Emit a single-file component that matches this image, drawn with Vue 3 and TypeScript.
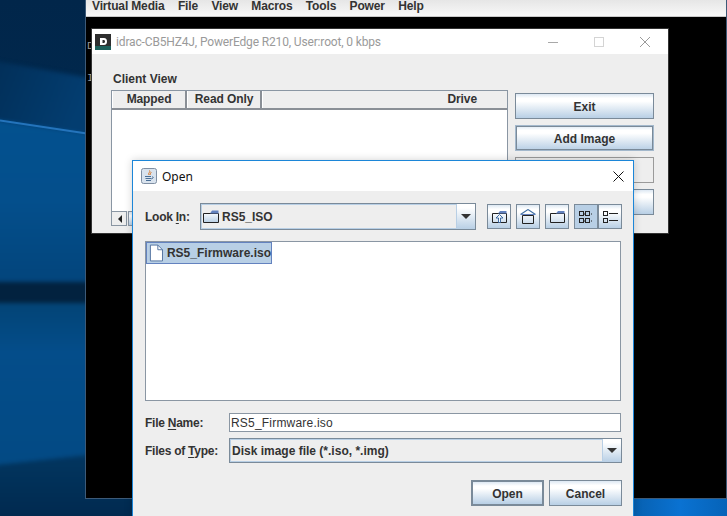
<template>
  <div class="desktop">
    <!-- windows 10 wallpaper behind the console -->
    <svg class="wallpaper" width="727" height="516" viewBox="0 0 727 516">
      <defs>
        <linearGradient id="wpTop" x1="0" y1="0" x2="0" y2="1">
          <stop offset="0" stop-color="#01264a" />
          <stop offset="1" stop-color="#022f58" />
        </linearGradient>
        <linearGradient id="wpUpper" x1="0" y1="0" x2="1" y2="0.300">
          <stop offset="0" stop-color="#022e57" />
          <stop offset="1" stop-color="#033d70" />
        </linearGradient>
        <linearGradient id="wpMid" x1="0" y1="0" x2="0" y2="1">
          <stop offset="0" stop-color="#03518f" />
          <stop offset="0.500" stop-color="#044f8c" />
          <stop offset="1" stop-color="#03457c" />
        </linearGradient>
        <linearGradient id="wpLow" x1="0" y1="0" x2="0" y2="1">
          <stop offset="0" stop-color="#034476" />
          <stop offset="0.300" stop-color="#044d8a" />
          <stop offset="1" stop-color="#034a84" />
        </linearGradient>
        <linearGradient id="wpBottom" x1="0" y1="0" x2="0" y2="1">
          <stop offset="0" stop-color="#023660" />
          <stop offset="1" stop-color="#01284d" />
        </linearGradient>
        <linearGradient id="wpStrip" x1="0" y1="0" x2="1" y2="0">
          <stop offset="0" stop-color="#0760b0" />
          <stop offset="0.500" stop-color="#0a72d2" />
          <stop offset="1" stop-color="#0663b8" />
        </linearGradient>
      </defs>
      <rect width="727" height="516" fill="url(#wpTop)" />
      <g class="wp-soft">
        <polygon points="-10,60 90,78 90,134 -10,119" fill="url(#wpUpper)" />
        <polygon points="-10,119 90,134 90,283 -10,283" fill="url(#wpMid)" />
        <rect x="-10" y="282" width="100" height="21" fill="#02223f" />
        <polygon points="-10,303 90,303 90,455 -10,466" fill="url(#wpLow)" />
        <polygon points="-10,466 90,455 140,455 140,526 -10,526" fill="url(#wpBottom)" />
      </g>
      <path d="M0 120.500L90 134" stroke="#2474bc" stroke-width="2" />
      <rect x="634" y="498" width="93" height="18" fill="url(#wpStrip)" />
    </svg>

    <div class="console">
      <div class="menubar">
        <span v-for="m in menus" :key="m">{{ m }}</span>
      </div>
      <pre class="term">D

I</pre>
    </div>

    <!-- virtual media window -->
    <section class="vm-window">
      <header class="vm-title">
        <svg class="vm-logo" width="16" height="16" viewBox="0 0 16 16">
          <rect width="16" height="16" fill="#2e2e2e" />
          <rect y="12" width="16" height="4" fill="#10897f" opacity="0.550" />
          <path d="M5 4h4c2 0 3 1.500 3 3.500S11 11 9 11H5z" fill="#fff" />
          <path d="M7.500 6h1.200c.8 0 1.300.6 1.300 1.500S9.500 9 8.700 9H7.500z" fill="#2e2e2e" />
        </svg>
        <span class="vm-caption">idrac-CB5HZ4J, PowerEdge R210, User:root, 0 kbps</span>
        <div class="caption-btns">
          <svg width="12" height="12" viewBox="0 0 12 12"><path d="M1 6.500h10" stroke="#a8a8a8" /></svg>
          <svg width="12" height="12" viewBox="0 0 12 12"><rect x="1.500" y="1.500" width="9" height="9" fill="none" stroke="#d4d4d4" /></svg>
          <svg width="12" height="12" viewBox="0 0 12 12"><path d="M1 1l10 10M11 1L1 11" stroke="#9a9a9a" /></svg>
        </div>
      </header>
      <div class="vm-body">
        <div class="client">
          <div class="client-label">Client View</div>
          <div class="table">
            <div class="thead">
              <div class="th mapped">Mapped</div>
              <div class="th readonly">Read Only</div>
              <div class="th drive">Drive</div>
            </div>
            <div class="tbody"></div>
            <div class="hscroll">
              <div class="scroll-left">
                <svg width="5" height="8" viewBox="0 0 5 8"><path d="M5 0v8L1 4z" fill="#222" /></svg>
              </div>
              <div class="scroll-thumb"></div>
            </div>
          </div>
        </div>
        <div class="side-btns">
          <button class="jbtn">Exit</button>
          <button class="jbtn focused">Add Image</button>
          <button class="jbtn disabled"></button>
          <button class="jbtn"></button>
        </div>
      </div>
    </section>

    <!-- open file dialog -->
    <section class="dialog">
      <header class="dlg-title">
        <svg class="java-icon" width="16" height="16" viewBox="0 0 16 16">
          <rect x="0.500" y="0.500" width="15" height="15" rx="2" fill="#d9e3ee" stroke="#7f8fa3" />
          <path d="M8.500 2.500c1.500 1.500-2 2.500-.5 4.500M10 4c.5 1-1.500 1.500-.8 3" fill="none" stroke="#d9731f" />
          <path d="M4 8.500h6M4.500 10.500h6M5 12.500h5" stroke="#4a6f96" />
          <path d="M11 9c1.500-.5 2 1-.5 2" fill="none" stroke="#4a6f96" />
        </svg>
        <span class="dlg-caption">Open</span>
        <svg class="dlg-close" width="11" height="11" viewBox="0 0 11 11"><path d="M.5.500l10 10M10.500.500l-10 10" stroke="#111" /></svg>
      </header>
      <div class="dlg-body">
        <div class="look-row">
          <label class="field-label look-label">Look <u>I</u>n:</label>
          <div class="combo look-combo">
            <div class="combo-value">
              <svg width="16" height="13" viewBox="0 0 16 13">
                <defs>
                  <linearGradient id="folderFill" x1="0" y1="0" x2="0" y2="1">
                    <stop offset="0" stop-color="#f6f9fc" />
                    <stop offset="1" stop-color="#b8cfe5" />
                  </linearGradient>
                </defs>
                <path d="M.5 3.500h15v9H.5z" fill="url(#folderFill)" stroke="#222" />
                <path d="M9 .500h6.500v3H7z" fill="#6382bf" />
              </svg>
              <span>RS5_ISO</span>
            </div>
            <div class="combo-arrow"><i></i></div>
          </div>
          <div class="tools">
            <button class="tool">
              <svg width="15" height="12" viewBox="0 0 15 12">
                <path d="M.5 2.500h14v9H.5z" fill="none" stroke="#222" />
                <path d="M8 0h6.500v2.500H6z" fill="#6382bf" />
                <path d="M7.500 3.500L4 7h2.500v4.500h2V7H11z" fill="#f4f8fc" stroke="#2f5f9a" stroke-width="0.900" />
              </svg>
            </button>
            <button class="tool">
              <svg width="16" height="15" viewBox="0 0 16 15">
                <path d="M.5 5.500L8 .500l7.500 5" fill="none" stroke="#3f6fa5" stroke-width="1.100" />
                <path d="M1 5.500h14" stroke="#6382bf" />
                <path d="M2.500 6.500h11v8h-11z" fill="none" stroke="#222" />
              </svg>
            </button>
            <button class="tool">
              <svg width="15" height="12" viewBox="0 0 15 12">
                <path d="M.5 2.500h14v9H.5z" fill="none" stroke="#222" />
                <path d="M8 0h6.500v2.500H6z" fill="#6382bf" />
              </svg>
            </button>
            <div class="tool-pair">
              <button class="tool active">
                <svg width="15" height="12" viewBox="0 0 15 12" fill="none" stroke="#222">
                  <rect x="0.500" y="0.500" width="4" height="4" />
                  <rect x="6.500" y="0.500" width="4" height="4" />
                  <rect x="0.500" y="7.500" width="4" height="4" />
                  <rect x="6.500" y="7.500" width="4" height="4" />
                  <path d="M5 3h1M12 3h1M5 10h1M12 10h1" />
                </svg>
              </button>
              <button class="tool">
                <svg width="15" height="12" viewBox="0 0 15 12" fill="none" stroke="#222">
                  <rect x="0.500" y="0.500" width="4" height="4" />
                  <rect x="0.500" y="7.500" width="4" height="4" />
                  <path d="M6 2.500h9M6 9.500h9" />
                </svg>
              </button>
            </div>
          </div>
        </div>

        <div class="file-list">
          <div class="file-item">
            <svg width="15" height="18" viewBox="0 0 15 18">
              <path d="M1.500.500h8l5 5v12h-13z" fill="#fff" stroke="#4d6f9d" />
              <path d="M9.500.500v5h5" fill="none" stroke="#4d6f9d" />
            </svg>
            <span>RS5_Firmware.iso</span>
          </div>
        </div>

        <div class="name-row">
          <label class="field-label">File <u>N</u>ame:</label>
          <div class="name-input">RS5_Firmware.iso</div>
        </div>
        <div class="type-row">
          <label class="field-label">Files of <u>T</u>ype:</label>
          <div class="combo type-combo">
            <div class="combo-value">Disk image file (*.iso, *.img)</div>
            <div class="combo-arrow"><i></i></div>
          </div>
        </div>
        <div class="actions">
          <button class="jbtn default">Open</button>
          <button class="jbtn">Cancel</button>
        </div>
      </div>
    </section>
  </div>
</template>

<script setup lang="ts">
const menus: string[] = ['Virtual Media', 'File', 'View', 'Macros', 'Tools', 'Power', 'Help']
</script>

<style>
html, body {
  margin: 0;
  background: #000;
}
</style>

<style scoped>
.desktop {
  position: relative;
  width: 727px;
  height: 516px;
  overflow: hidden;
  font-family: "Liberation Sans", Arial, sans-serif;
  font-size: 12px;
  font-weight: 700;
  color: #333;
}
.wallpaper {
  position: absolute;
  inset: 0;
  display: block;
}
.wp-soft {
  filter: blur(2px);
}
.console {
  position: absolute;
  left: 85px;
  top: 0;
  right: 0;
  height: 499px;
  box-sizing: border-box;
  background: #000;
  border: 1px solid #3d5a78;
  border-top: 0;
}
.menubar {
  display: flex;
  gap: 13.4px;
  height: 17px;
  box-sizing: border-box;
  padding: 0 0 0 6px;
  line-height: 12px;
  letter-spacing: -0.15px;
  background: linear-gradient(#e6e6e6, #f8f8f8);
  border-bottom: 1px solid #c9c9c9;
  color: #333;
}
.term {
  margin: 21px 0 0 1px;
  font: 11px/16px "Liberation Mono", monospace;
  color: #9c9c9c;
}
.vm-window {
  position: absolute;
  left: 91px;
  top: 28px;
  width: 578px;
  height: 206px;
  box-sizing: border-box;
  border: 1px solid #333;
  background: #eee;
  display: flex;
  flex-direction: column;
}
.vm-title {
  height: 25px;
  flex: none;
  background: #fff;
  display: flex;
  align-items: center;
  padding-left: 3px;
  font: 400 12px Roboto, "Noto Sans", sans-serif;
  letter-spacing: -0.15px;
  color: #9a9a9a;
}
.vm-logo {
  flex: none;
  margin-right: 5px;
}
.vm-caption {
  flex: 1;
  white-space: nowrap;
}
.caption-btns {
  display: flex;
  gap: 34px;
  padding-right: 17px;
}
.vm-body {
  flex: 1;
  min-height: 0;
  display: flex;
  padding: 18px 14px 0 19px;
  gap: 7px;
}
.client {
  width: 397px;
  flex: none;
}
.client-label {
  height: 18px;
  line-height: 14px;
  padding-left: 2px;
}
.table {
  height: 136px;
  border: 1px solid #8a96a3;
  border-bottom: 0;
  box-sizing: border-box;
  display: flex;
  flex-direction: column;
  background: #fff;
}
.thead {
  display: flex;
  height: 19px;
  flex: none;
  background: #eee;
  border-bottom: 2px solid #8a8f96;
  box-sizing: border-box;
  line-height: 16px;
}
.th {
  box-sizing: border-box;
  border-left: 1px solid #fff;
  border-right: 2px solid #8a8f96;
  text-align: center;
  letter-spacing: -0.1px;
}
.mapped { width: 75px; }
.readonly { width: 75px; }
.drive {
  flex: 1;
  border-right: 0;
  text-align: right;
  padding-right: 30px;
}
.tbody { flex: 1; }
.hscroll {
  height: 15px;
  flex: none;
  display: flex;
  background: #eee;
}
.scroll-left {
  width: 15px;
  flex: none;
  display: flex;
  align-items: center;
  justify-content: center;
  border: 1px solid #8a96a3;
  border-left: 0;
  box-sizing: border-box;
}
.scroll-thumb {
  flex: 1;
  margin-left: 1px;
  box-sizing: border-box;
  border: 1px solid #8a96a3;
  background: linear-gradient(#dde8f3, #fff 30%, #b8cfe5);
}
.side-btns {
  padding-top: 21px;
  display: flex;
  flex-direction: column;
  gap: 6px;
  width: 139px;
}
.jbtn {
  height: 26px;
  flex: none;
  padding: 1px 0 0;
  box-sizing: border-box;
  border: 1px solid #7a8a99;
  background: linear-gradient(#dde8f3 0, #fff 18%, #fff 30%, #b8cfe5 100%);
  font: inherit;
  color: #333;
  text-align: center;
}
.jbtn.focused {
  border: 1px solid #a3b8cc;
  box-shadow: inset 0 0 0 1px #7a8a99;
}
.jbtn.disabled {
  background: #eee;
  border-color: #9a9a9a;
}
.dialog {
  position: absolute;
  left: 132px;
  top: 160px;
  width: 502px;
  height: 356px;
  box-sizing: border-box;
  border: 1px solid #1c86d8;
  border-bottom: 0;
  background: #eee;
  display: flex;
  flex-direction: column;
  box-shadow: 0 0 8px rgba(0, 0, 0, 0.18);
}
.dlg-title {
  height: 30px;
  flex: none;
  background: #fff;
  display: flex;
  align-items: center;
  padding-left: 8px;
  font: 400 12px "Noto Sans", "Open Sans", sans-serif;
  color: #111;
}
.java-icon {
  margin-right: 5px;
}
.dlg-caption {
  flex: 1;
}
.dlg-close {
  margin-right: 9px;
}
.dlg-body {
  flex: 1;
  min-height: 0;
  padding: 12px 11px 0 12px;
  display: flex;
  flex-direction: column;
}
.look-row {
  display: flex;
  align-items: center;
  height: 27px;
  flex: none;
}
.combo {
  display: flex;
  box-sizing: border-box;
  border: 1px solid #7a8a99;
  background: #eee;
  box-shadow: inset 0 0 0 1px #b8cfe5;
}
.look-combo {
  width: 276px;
  height: 27px;
  flex: none;
}
.combo-value {
  flex: 1;
  display: flex;
  align-items: center;
  gap: 3px;
  padding-left: 2px;
}
.combo-arrow {
  width: 19px;
  flex: none;
  box-sizing: border-box;
  border-left: 1px solid #b8cfe5;
  background: linear-gradient(#fff 15%, #b8cfe5);
  display: flex;
  align-items: center;
  justify-content: center;
}
.combo-arrow i {
  width: 0;
  height: 0;
  border-left: 5px solid transparent;
  border-right: 5px solid transparent;
  border-top: 5px solid #333;
}
.tools {
  display: flex;
  gap: 5px;
  margin-left: 11px;
}
.tool-pair {
  display: flex;
}
.tool {
  width: 24px;
  height: 25px;
  padding: 0;
  box-sizing: border-box;
  border: 1px solid #7a8a99;
  background: linear-gradient(#dde8f3 0, #fff 18%, #fff 30%, #b8cfe5 100%);
  display: flex;
  align-items: center;
  justify-content: center;
}
.tool.active {
  background: #b8cfe5;
}
.file-list {
  margin-top: 11px;
  margin-right: 1px;
  height: 160px;
  flex: none;
  box-sizing: border-box;
  background: #fff;
  border: 1px solid #8a96a3;
}
.file-item {
  width: 126px;
  height: 22px;
  box-sizing: border-box;
  display: flex;
  align-items: center;
  gap: 4px;
  padding-left: 2px;
  background: #b8cfe5;
  border: 1px solid #6382bf;
  color: #333;
}
.name-row,
.type-row {
  display: flex;
  align-items: center;
  flex: none;
}
.name-row {
  margin-top: 12px;
  height: 19px;
}
.type-row {
  margin-top: 6px;
  height: 25px;
}
.field-label {
  width: 84px;
  flex: none;
  letter-spacing: -0.25px;
}
.field-label.look-label {
  width: 55px;
}
.name-input {
  width: 392px;
  height: 19px;
  box-sizing: border-box;
  background: #fff;
  border: 1px solid #8a96a3;
  padding-left: 1px;
  font-weight: 400;
  line-height: 18px;
  letter-spacing: 0.2px;
  color: #333;
}
.type-combo {
  width: 393px;
  height: 25px;
}
.actions {
  margin-top: 17px;
  display: flex;
  justify-content: flex-end;
  gap: 5px;
}
.actions .jbtn {
  width: 73px;
}
.jbtn.default {
  border: 2px solid #7a8a99;
}
u {
  text-underline-offset: 2px;
}
</style>
